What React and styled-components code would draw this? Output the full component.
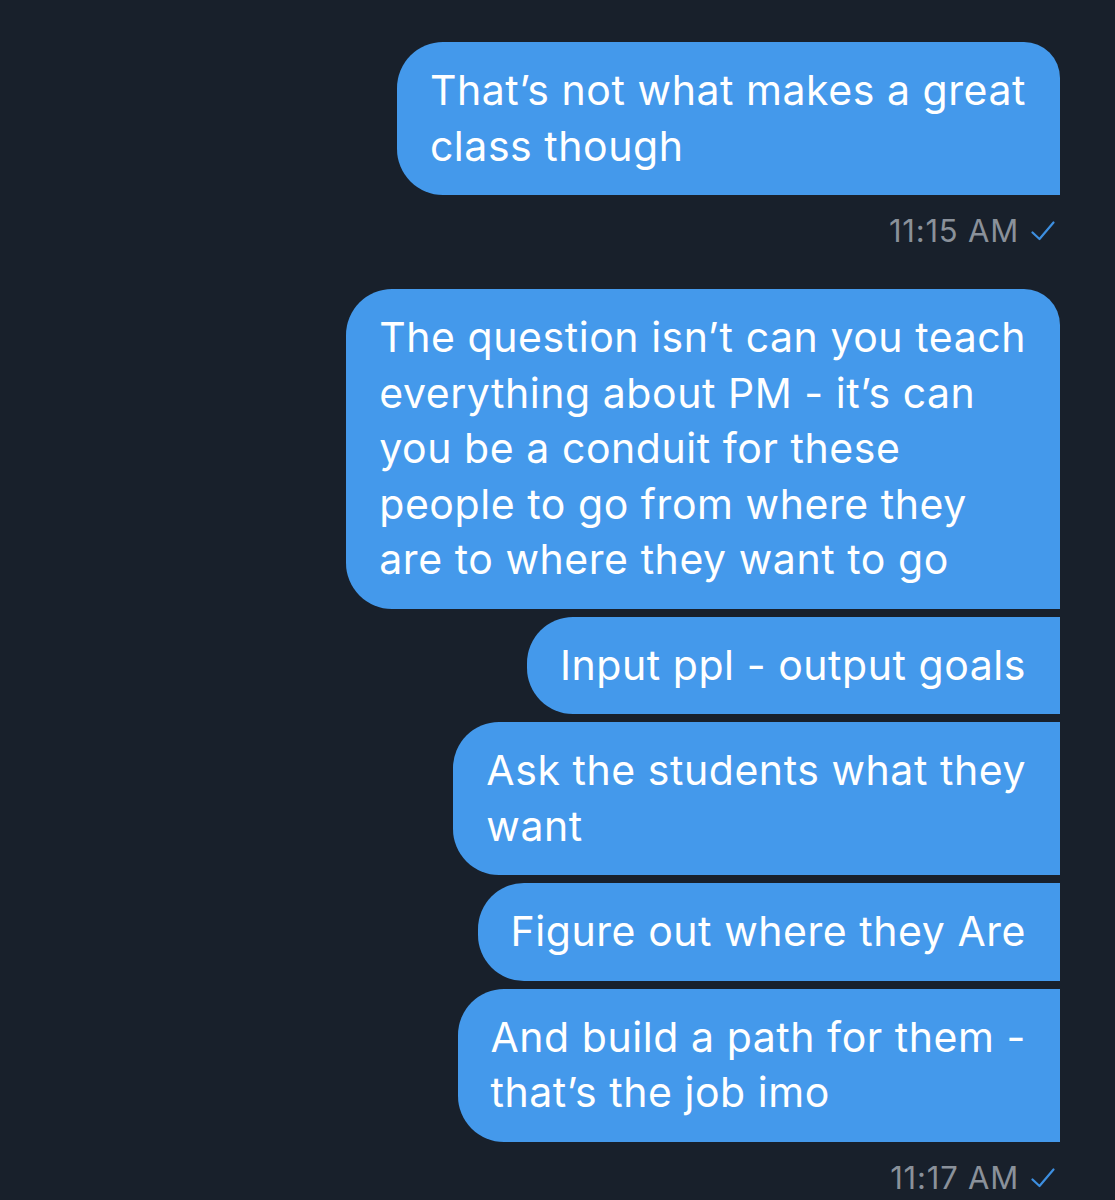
import React from "react";
import styled, { createGlobalStyle } from "styled-components";

const GlobalStyle = createGlobalStyle`
  html, body {
    margin: 0;
    padding: 0;
    background: #18202b;
  }
  body {
    font-family: Inter, "Noto Sans", "Liberation Sans", sans-serif;
    -webkit-font-smoothing: antialiased;
  }
`;

const groups = [
  {
    time: "11:15 AM",
    messages: [["That’s not what makes a great", "class though"]],
  },
  {
    time: "11:17 AM",
    messages: [
      [
        "The question isn’t can you teach",
        "everything about PM - it’s can",
        "you be a conduit for these",
        "people to go from where they",
        "are to where they want to go",
      ],
      ["Input ppl - output goals"],
      ["Ask the students what they", "want"],
      ["Figure out where they Are"],
      ["And build a path for them -", "that’s the job imo"],
    ],
  },
];

export default function App() {
  return (
    <>
      <GlobalStyle />
      <Thread>
        {groups.map((g, gi) => (
          <Group key={gi}>
            {g.messages.map((lines, mi) => (
              <Bubble key={mi} $first={mi === 0}>
                {lines.map((l, li) => (
                  <Line key={li}>{l}</Line>
                ))}
              </Bubble>
            ))}
            <Stamp>
              {g.time}
              <Check viewBox="0 0 24 20" width="24" height="20">
                <path
                  d="M1.5 11.5 L8.5 18 L22.5 1.5"
                  fill="none"
                  stroke="#3d8fe0"
                  strokeWidth="2.2"
                  strokeLinecap="round"
                  strokeLinejoin="round"
                />
              </Check>
            </Stamp>
          </Group>
        ))}
      </Thread>
    </>
  );
}

const Thread = styled.main`
  min-height: 1200px;
  box-sizing: border-box;
  padding: 42px 55px 0 0;
  display: flex;
  flex-direction: column;
  align-items: flex-end;
  gap: 40px;
`;

const Group = styled.section`
  display: flex;
  flex-direction: column;
  align-items: flex-end;
  gap: 8px;
`;

const Bubble = styled.div`
  background: #4499eb;
  color: #ffffff;
  font-size: 41px;
  line-height: 55.5px;
  letter-spacing: 0.55px;
  padding: 21px 34px 21px 33px;
  border-radius: 46px ${(p) => (p.$first ? "36px" : "0")} 0 46px;
  white-space: nowrap;
`;

const Line = styled.div``;

const Stamp = styled.div`
  margin-top: 10px;
  display: flex;
  align-items: center;
  gap: 12px;
  padding-right: 5px;
  color: #8a919a;
  font-size: 31px;
  line-height: 36px;
  letter-spacing: 0.8px;
`;

const Check = styled.svg`
  display: block;
`;
